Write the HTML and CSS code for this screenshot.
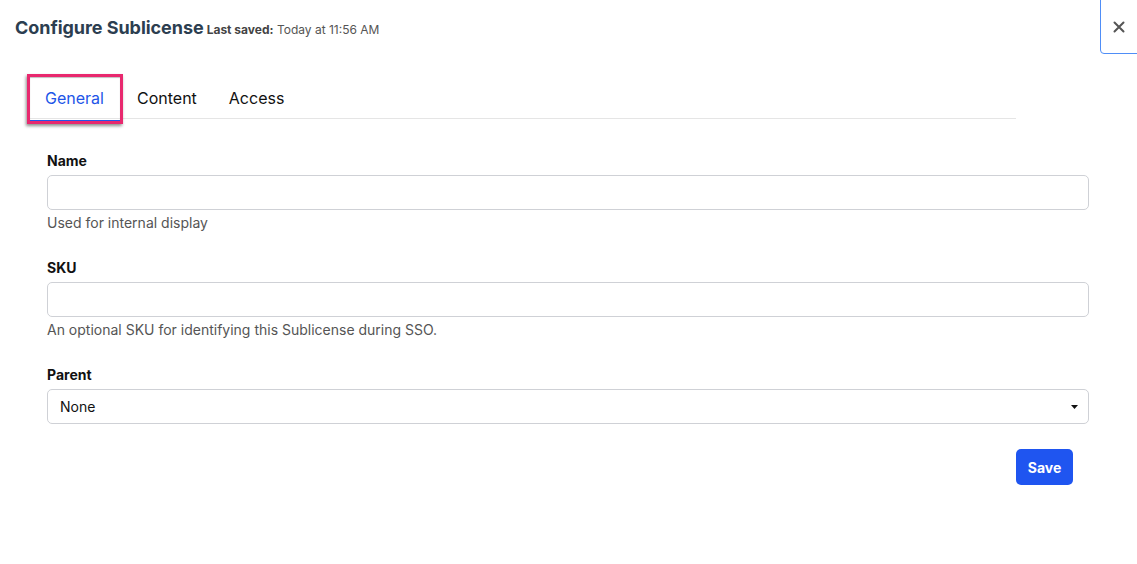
FILE: index.html
```html
<!DOCTYPE html>
<html lang="en">
<head>
    <meta charset="UTF-8">
    <meta name="viewport" content="width=device-width, initial-scale=1.0">
    <title>Configure Sublicense</title>
    <link rel="stylesheet" href="styles.css">
</head>
<body>
    <div class="modal">
        <div class="modal-header">
            <h2>Configure Sublicense</h2>
            <span class="saved"><b>Last saved:</b> Today at 11:56 AM</span>
        </div>
        <button class="close-btn" aria-label="Close">
            <svg width="12" height="12" viewBox="0 0 12 12">
                <path d="M1.5 1.5 L10.5 10.5 M10.5 1.5 L1.5 10.5" stroke="#555" stroke-width="2" stroke-linecap="round"/>
            </svg>
        </button>

        <div class="tabs">
            <a class="tab active">General</a>
            <a class="tab">Content</a>
            <a class="tab">Access</a>
        </div>

        <form class="form">
            <div class="field">
                <label>Name</label>
                <input type="text">
                <p class="help">Used for internal display</p>
            </div>
            <div class="field">
                <label>SKU</label>
                <input type="text">
                <p class="help">An optional SKU for identifying this Sublicense during SSO.</p>
            </div>
            <div class="field last">
                <label>Parent</label>
                <div class="select">
                    <span>None</span>
                    <svg width="7" height="4" viewBox="0 0 7 4"><path d="M0 0 L7 0 L3.5 4 Z" fill="#111"/></svg>
                </div>
            </div>
            <div class="actions">
                <button type="button" class="save-btn">Save</button>
            </div>
        </form>
    </div>
</body>
</html>
```

FILE: styles.css
```css
html {
    box-sizing: border-box;
}

*, *::before, *::after {
    box-sizing: inherit;
}

body {
    margin: 0;
    background: white;
    font-family: Inter, "Noto Sans", sans-serif;
    color: #111;
}

.modal {
    position: relative;
    min-height: 564px;
}

.modal-header {
    display: flex;
    align-items: baseline;
    padding: 17px 0 0 15px;
    height: 74px;
}

.modal-header h2 {
    margin: 0;
    font-size: 18px;
    font-weight: 700;
    color: #2c3e50;
    letter-spacing: -0.05px;
}

.saved {
    margin-left: 3px;
    font-size: 12px;
    color: #555;
}

.saved b {
    color: #444;
}

.close-btn {
    position: absolute;
    top: -1px;
    right: -6px;
    width: 43px;
    height: 55px;
    background: white;
    border: 1px solid #4f8ef7;
    border-radius: 0 0 0 4px;
    display: flex;
    align-items: center;
    justify-content: center;
    padding: 0 6px 0 0;
    cursor: pointer;
}

.tabs {
    display: flex;
    margin-left: 27px;
    width: 989px;
    border-bottom: 1px solid #e5e5e5;
    height: 45px;
}

.tab {
    font-size: 16px;
    color: #111;
    padding: 14px 16px 0;
    height: 45px;
    cursor: pointer;
}

.tab.active {
    color: #2155e8;
    padding: 11px 16px 0 15px;
    height: 50px;
    width: 96px;
    border: 3px solid #e8286e;
    box-shadow: inset 0 -1px 0 #2155e8, inset 0 1px 1px rgba(0, 0, 0, 0.25), -1px 2px 3px rgba(0, 0, 0, 0.45);
    margin-right: -2px;
    position: relative;
    z-index: 1;
}

.form {
    margin: 33px 0 0 47px;
    width: 1042px;
}

.field {
    margin-bottom: 28px;
}

.field.last {
    margin-bottom: 0;
}

.field label {
    display: block;
    font-size: 14px;
    font-weight: 700;
    margin-bottom: 6px;
    line-height: 17px;
}

.field input,
.select {
    display: flex;
    align-items: center;
    width: 100%;
    height: 35px;
    border: 1px solid #cfd1d6;
    border-radius: 5px;
    font-family: inherit;
    font-size: 14px;
    padding: 0 12px;
    background: white;
}

.select {
    justify-content: space-between;
    padding: 0 10px 0 12px;
}

.help {
    margin: 4px 0 0;
    font-size: 14px;
    color: #555;
    line-height: 17px;
}

.actions {
    display: flex;
    justify-content: flex-end;
    margin-top: 25px;
    padding-right: 16px;
}

.save-btn {
    background: #1f55f0;
    color: white;
    border: none;
    border-radius: 5px;
    font-family: inherit;
    font-size: 14px;
    font-weight: 700;
    width: 57px;
    height: 36px;
    cursor: pointer;
}
```
